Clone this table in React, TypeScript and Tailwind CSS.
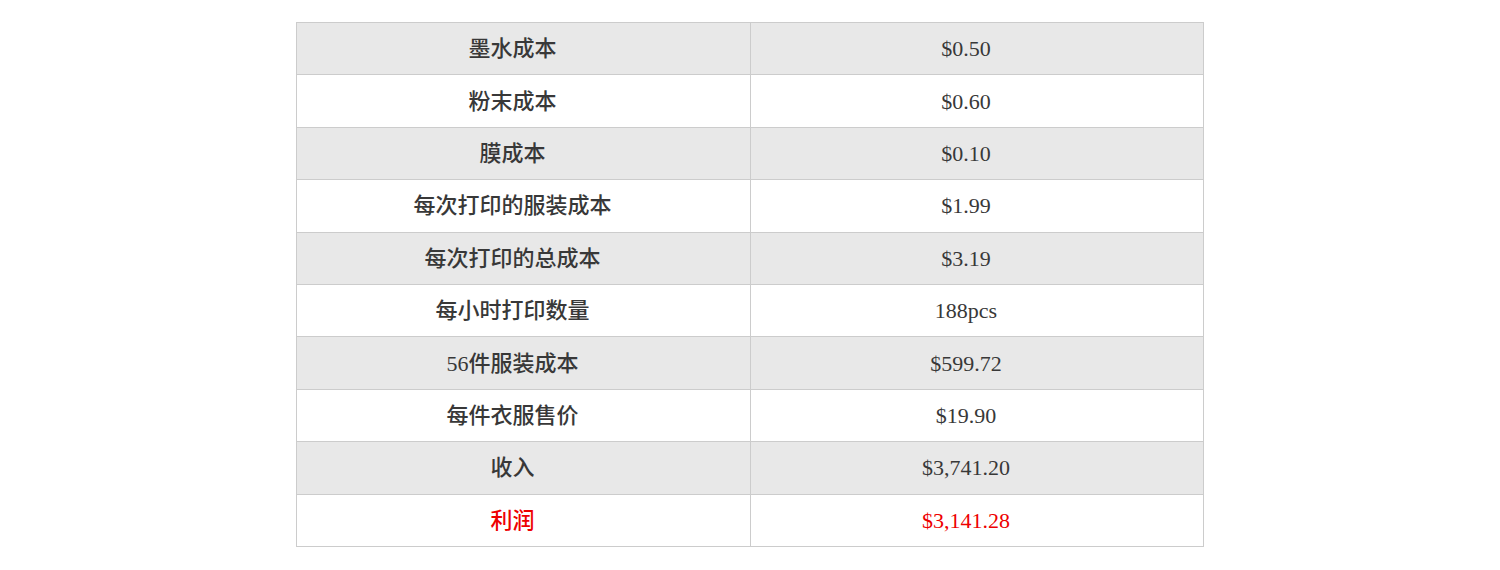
import React from "react";

const rows: [string, string, boolean?][] = [
  ["墨水成本", "$0.50"],
  ["粉末成本", "$0.60"],
  ["膜成本", "$0.10"],
  ["每次打印的服装成本", "$1.99"],
  ["每次打印的总成本", "$3.19"],
  ["每小时打印数量", "188pcs"],
  ["56件服装成本", "$599.72"],
  ["每件衣服售价", "$19.90"],
  ["收入", "$3,741.20"],
  ["利润", "$3,141.28", true],
];

export default function App() {
  return (
    <div className="w-[1500px] h-[570px] bg-white pt-[22px]">
      <table
        className="mx-auto w-[908px] border-collapse text-[22px] text-[#383838]"
        style={{ fontFamily: '"Liberation Serif", "Noto Sans CJK SC", serif' }}
      >
        <tbody>
          {rows.map(([a, b, red], i) => (
            <tr key={i} className={i % 2 === 0 ? "bg-[#e8e8e8] h-[52.4px]" : "bg-white h-[52.4px]"}>
              <td className={"border border-[#cccccc] text-center align-middle pl-0 pr-[22px] py-0 w-[454px] font-medium " + (red ? "text-[#ee0000]" : "")}>
                {a}
              </td>
              <td className={"border border-[#cccccc] text-center align-middle pl-0 pr-[22px] py-0 " + (red ? "text-[#ee0000]" : "")}>
                {b}
              </td>
            </tr>
          ))}
        </tbody>
      </table>
    </div>
  );
}
